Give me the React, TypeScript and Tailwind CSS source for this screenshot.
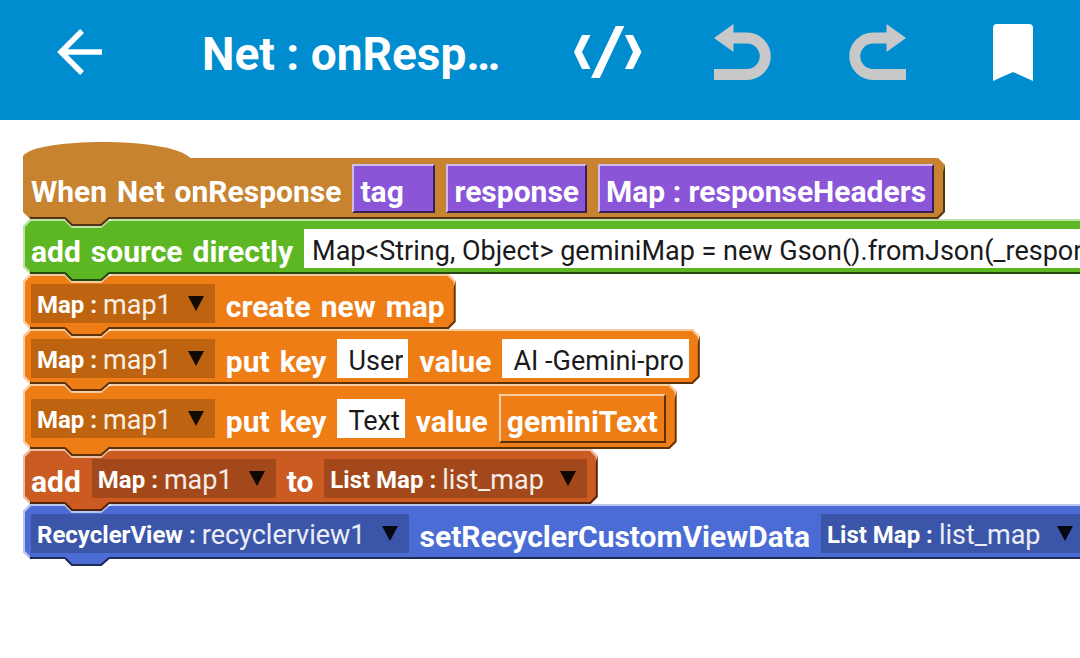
import type { ReactNode } from "react";
import clsx from "clsx";

const CHAMFER =
  "[clip-path:polygon(0_7px,7px_0,calc(100%-7px)_0,100%_7px,100%_calc(100%-7px),calc(100%-7px)_100%,7px_100%,0_calc(100%-7px))]";
const CHAMFER_INNER =
  "[clip-path:polygon(0_6px,6px_0,calc(100%-6px)_0,100%_6px,100%_calc(100%-6px),calc(100%-6px)_100%,6px_100%,0_calc(100%-6px))]";
const SHADE =
  "[clip-path:polygon(7px_100%,calc(100%-7px)_100%,100%_calc(100%-7px),100%_7px,calc(100%-7px)_50%,7px_50%)]";

const COLORS = {
  event: { bg: "bg-[#c88330]", text: "text-[#c88330]" },
  source: { bg: "bg-[#5cb722]", text: "text-[#5cb722]" },
  map: { bg: "bg-[#ee7d16]", text: "text-[#ee7d16]" },
  list: { bg: "bg-[#cc5b22]", text: "text-[#cc5b22]" },
  view: { bg: "bg-[#4a6cd4]", text: "text-[#4a6cd4]" },
};

type Kind = keyof typeof COLORS;

function Block({ kind, hat, children }: { kind: Kind; hat?: boolean; children: ReactNode }) {
  const color = COLORS[kind];
  return (
    <div className={clsx("relative w-max", hat && "mt-4")}>
      <div className={clsx("absolute inset-0", CHAMFER, color.bg)}>
        {!hat && <div className="absolute inset-0 bg-white/60" />}
        <div className={clsx("absolute inset-0", SHADE, color.bg)}>
          <div className="h-full bg-black/60" />
        </div>
        <div className={clsx("absolute inset-[2px]", CHAMFER_INNER, color.bg)} />
      </div>
      {hat && (
        <svg
          className={clsx("absolute bottom-full left-0 -mb-3", color.text)}
          width="168"
          height="28"
          viewBox="0 0 168 28"
          fill="currentColor"
        >
          <path d="M0 14C14 -5 152 -5 168 17V28H0Z" />
        </svg>
      )}
      <div
        className={clsx(
          "relative flex items-center gap-[11px] pl-2 pr-[11px]",
          hat ? "py-[6px]" : "pt-[10px] pb-[6px]",
        )}
      >
        {children}
      </div>
      {/* connector that plugs into the next block */}
      <svg
        className={clsx("absolute top-full left-[42px] z-10 -mt-[2px]", color.text)}
        width="46"
        height="12"
        viewBox="0 0 46 12"
        fill="none"
      >
        <path d="M0 0L7 8H36L45 0Z" fill="currentColor" />
        <path d="M0 3L7 10H36L44 3H46" stroke="#fff" strokeOpacity=".6" strokeWidth="2" />
        <path d="M0 1L7 8H36L44 1H46" stroke="currentColor" strokeWidth="2" />
        <path d="M0 1L7 8H36L44 1H46" stroke="#000" strokeOpacity=".6" strokeWidth="2" />
      </svg>
    </div>
  );
}

function Label({ text }: { text: string }) {
  return (
    <span className="flex gap-[10px] pt-[6px] text-[30px] leading-[33px] font-bold text-white">
      {text.split(" ").map((word) => (
        <span key={word}>{word}</span>
      ))}
    </span>
  );
}

function Param({ text, kind }: { text: string; kind: "var" | "map" }) {
  return (
    <button
      type="button"
      className={clsx(
        "h-[49px] min-w-[83px] border-2 border-t-white/60 border-r-black/60 border-b-black/60 border-l-white/60 px-[6px] pt-[6px] text-left text-[30px] leading-[35px] font-bold text-white",
        kind === "var" ? "bg-[#8a55d7]" : "bg-[#ee7d16]",
      )}
    >
      {text}
    </button>
  );
}

function Picker({ type, value }: { type: string; value: string }) {
  return (
    <label className="relative flex h-[39px] items-center gap-[6px] bg-black/20 pl-[6px] text-white">
      <span className="pt-1 text-[24px] leading-[35px] font-bold">{type} :</span>
      <select
        defaultValue={value}
        className="h-[39px] appearance-none field-sizing-content bg-transparent pt-1 pr-[43px] text-[27px] leading-[35px] font-normal text-white/90 outline-none"
      >
        <option>{value}</option>
      </select>
      <svg
        className="pointer-events-none absolute top-3 right-[11px]"
        width="16"
        height="15"
        viewBox="0 0 16 15"
      >
        <path d="M0 0H16L8 15Z" fill="#000" fillOpacity=".9" />
      </svg>
    </label>
  );
}

function Field({ name, value, wide }: { name: string; value: string; wide?: boolean }) {
  return (
    <input
      aria-label={name}
      defaultValue={value}
      className={clsx(
        "h-[39px] field-sizing-content bg-white pt-1 pr-[5px] text-[27px] leading-[35px] font-normal text-[#1a1a1a] outline-none",
        wide ? "pl-[8px]" : "pl-[11px]",
      )}
    />
  );
}

function UndoIcon({ flip }: { flip?: boolean }) {
  return (
    <svg className={clsx(flip && "-scale-x-100")} width="57" height="57" viewBox="0 0 57 57">
      <path d="M0 14L19.5 0V28Z" fill="#c8c8c8" />
      <path d="M18 14H33A18.25 18.25 0 0 1 33 50.5H0" fill="none" stroke="#c8c8c8" strokeWidth="11" />
    </svg>
  );
}

function Toolbar() {
  const action = "flex h-[104px] w-[135px] shrink-0 items-center justify-center";
  return (
    <header className="flex h-[120px] items-center bg-[#008dcf] pb-4 text-white">
      <button type="button" aria-label="Back" className="flex h-[104px] w-40 shrink-0 items-center justify-center">
        <svg width="46" height="46" viewBox="0 0 46 46" fill="none" stroke="currentColor" strokeWidth="5.5">
          <path d="M45 23H4M25 2L4 23L25 44" />
        </svg>
      </button>
      <h1 className="ml-[42px] min-w-0 flex-1 pt-1 text-[46px] leading-[56px] font-bold whitespace-nowrap">
        Net : onResp…
      </h1>
      <button type="button" aria-label="Show source" className={action}>
        <svg width="68" height="52" viewBox="0 0 68 52" fill="currentColor">
          <path d="M0 26L8 9H16.5L8 26L16.5 43H8ZM41.7 0H50.3L25.8 52H17ZM51 9H59L67.5 26L59 43H51L59 26Z" />
        </svg>
      </button>
      <button type="button" aria-label="Undo" className={action}>
        <UndoIcon />
      </button>
      <button type="button" aria-label="Redo" className={action}>
        <UndoIcon flip />
      </button>
      <button type="button" aria-label="Bookmark" className={action}>
        <svg width="40" height="57" viewBox="0 0 40 57" fill="currentColor">
          <path d="M4 0H36Q40 0 40 4V57L20 48L0 57V4Q0 0 4 0Z" />
        </svg>
      </button>
    </header>
  );
}

export default function App() {
  return (
    <div className="min-h-screen overflow-x-hidden bg-white font-['Roboto',sans-serif]">
      <Toolbar />
      <main className="overflow-hidden pt-[22px] pb-6 pl-[23px]">
        <Block kind="event" hat>
          <Label text="When Net onResponse" />
          <Param kind="var" text="tag" />
          <Param kind="var" text="response" />
          <Param kind="var" text="Map : responseHeaders" />
        </Block>
        <Block kind="source">
          <Label text="add source directly" />
          <Field
            name="Source"
            wide
            value="Map<String, Object> geminiMap = new Gson().fromJson(_response"
          />
        </Block>
        <Block kind="map">
          <Picker type="Map" value="map1" />
          <Label text="create new map" />
        </Block>
        <Block kind="map">
          <Picker type="Map" value="map1" />
          <Label text="put key" />
          <Field name="Key" value="User" />
          <Label text="value" />
          <Field name="Value" value="AI -Gemini-pro" />
        </Block>
        <Block kind="map">
          <Picker type="Map" value="map1" />
          <Label text="put key" />
          <Field name="Key" value="Text" />
          <Label text="value" />
          <Param kind="map" text="geminiText" />
        </Block>
        <Block kind="list">
          <Label text="add" />
          <Picker type="Map" value="map1" />
          <Label text="to" />
          <Picker type="List Map" value="list_map" />
        </Block>
        <Block kind="view">
          <Picker type="RecyclerView" value="recyclerview1" />
          <Label text="setRecyclerCustomViewData" />
          <Picker type="List Map" value="list_map" />
        </Block>
      </main>
    </div>
  );
}
